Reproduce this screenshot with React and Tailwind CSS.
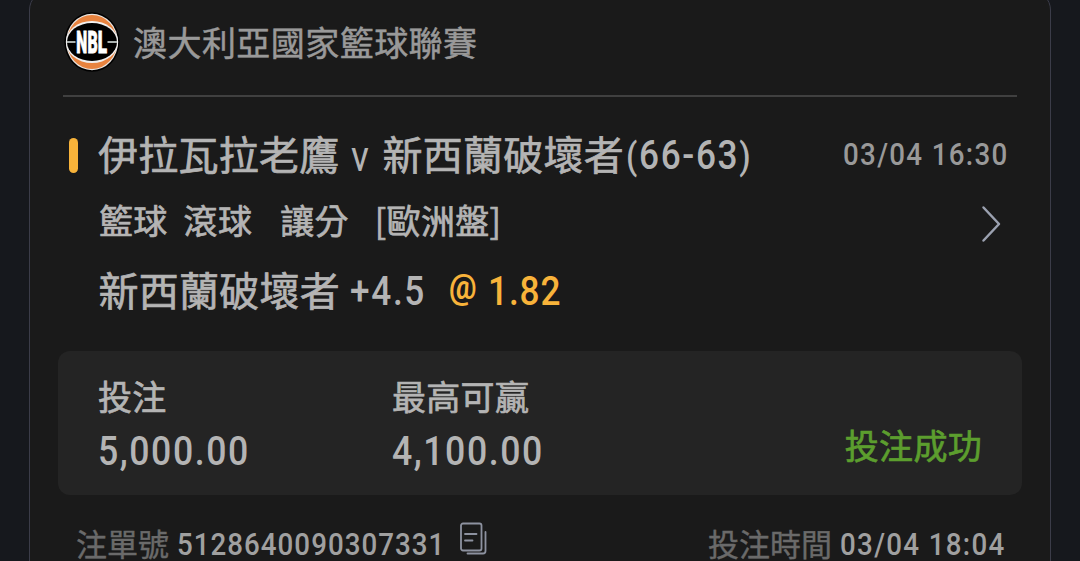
import { clsx } from 'clsx';

// Narrow figures: Roboto squeezed horizontally, the wrapper keeps the final width.
function Num({ children, className, box }) {
  return (
    <span className={clsx('block shrink-0 whitespace-nowrap font-[Roboto,sans-serif] font-medium [-webkit-text-stroke:0px]', box)}>
      <span className={clsx('inline-block origin-left scale-x-[0.88] whitespace-pre', className)}>{children}</span>
    </span>
  );
}

function LeagueLogo() {
  return (
    <svg className="h-[60px] w-[56px] shrink-0" viewBox="0 0 56 60">
      <ellipse cx="28" cy="30" rx="27.6" ry="29.8" fill="#000" />
      <ellipse cx="28" cy="30" rx="26" ry="28.2" fill="#e9e4e0" />
      <ellipse cx="28" cy="30" rx="25" ry="27" fill="#e8833f" />
      <ellipse cx="28" cy="30" rx="26.2" ry="21" fill="#f0efee" />
      <ellipse cx="28" cy="30" rx="25" ry="19" fill="#000" />
      <path d="M3 30h50" stroke="#a9b0ae" strokeWidth="1.8" />
      <rect x="11.5" y="18" width="32" height="24" fill="#000" />
      <g fontFamily="Roboto, sans-serif" fontWeight="900" fontSize="30.5" fill="#fff" stroke="#fff" strokeWidth="0.9">
        <text transform="translate(12.2 41) scale(0.51 1)">N</text>
        <text transform="translate(23.4 41) scale(0.52 1)">B</text>
        <text transform="translate(33.7 41) scale(0.56 1)">L</text>
      </g>
    </svg>
  );
}

function CopyIcon() {
  return (
    <svg className="mb-[10px] h-[34px] w-[28px] shrink-0" viewBox="0 0 28 34" fill="none" stroke="#8d92a0" strokeWidth="1.8" strokeLinecap="round" strokeLinejoin="round">
      <rect x="1" y="1.500" width="20.500" height="27" rx="2" />
      <path d="M5 12h11.500M5 18.500h7.500" />
      <path d="M25.500 10v19a2.500 2.500 0 0 1-2.500 2.500H7.500" />
    </svg>
  );
}

function Stat({ label, value, className }) {
  return (
    <div className={className}>
      <div className="h-[50px] text-[34px] leading-[50px] tracking-[0.3px]">{label}</div>
      <Num box="h-[52px] pt-[4px]" className="text-[40.5px] leading-[52px] tracking-[1.75px]">{value}</Num>
    </div>
  );
}

export default function App() {
  return (
    <div className="h-[561px] w-[1080px] overflow-hidden bg-[#16181d] font-['Noto_Sans_CJK_TC',sans-serif] text-[#b4b4b4] [-webkit-text-stroke:0.7px]">
      <div className="-mt-2.5 ml-[29px] h-[620px] w-[1022px] rounded-[20px] border-[1.5px] border-[#3b3c49] bg-[#1a1a1a] pt-[9px]">
        <div className="mx-[33px] flex h-[97px] items-center border-b-2 border-[#404040] pb-[11px] text-[#999]">
          <div className="pl-px">
            <LeagueLogo />
          </div>
          <div className="ml-[13px] pb-px text-[34px] leading-[50px] tracking-[0.45px] [-webkit-text-stroke:0.5px]">澳大利亞國家籃球聯賽</div>
        </div>

        <div className="mt-[28px] mr-[42px] ml-[38.5px] flex h-[60px] items-center whitespace-nowrap">
          <div className="h-[35px] w-[9px] rounded-full bg-[#f8b33a]" />
          <div className="ml-[20.5px] pb-[4px] text-[40px] leading-[60px] tracking-[0.25px]">伊拉瓦拉老鷹</div>
          <Num box="ml-[11px] w-[21px] pt-[3px]" className="text-[42px] leading-[60px] font-normal">v</Num>
          <div className="ml-[11px] pb-[4px] text-[40px] leading-[60px] tracking-[0.25px]">新西蘭破壞者</div>
          <Num box="ml-[2px] w-[128px] pt-[3px]" className="text-[40px] leading-[60px] tracking-[1.9px]">
            <span className="text-[37px]">(</span>66-63<span className="text-[37px]">)</span>
          </Num>
          <Num box="ml-auto w-[165px]" className="text-[31.5px] leading-[54px] tracking-[1.5px] text-[#999]">03/04 16:30</Num>
        </div>

        <div className="mr-[49px] ml-[69px] flex h-[70px] items-center whitespace-nowrap text-[34px] leading-[50px] tracking-[0.3px]">
          <span>籃球</span>
          <span className="ml-[16px]">滾球</span>
          <span className="ml-[28px]">讓分</span>
          <span className="ml-[26px]">[歐洲盤]</span>
          <svg className="mt-[8px] ml-auto h-[38px] w-[20px]" viewBox="0 0 20 38" fill="none" stroke="#9ba1b0" strokeWidth="2.5" strokeLinecap="round" strokeLinejoin="round">
            <path d="M2.500 2.500l15.500 16.500L2.500 35.500" />
          </svg>
        </div>

        <div className="ml-[68.5px] flex h-[70px] items-center whitespace-nowrap">
          <div className="pb-[3px] text-[40px] leading-[60px] tracking-[0.25px]">新西蘭破壞者</div>
          <Num box="ml-[10px] w-[99px] pt-[4px]" className="text-[40px] leading-[60px] tracking-[1.9px]">+4.5</Num>
          <Num box="w-[39px] pb-[4px]" className="text-[35px] leading-[56px] scale-x-[0.82] font-bold text-[#f8b33a]">@</Num>
          <Num box="w-[90px] pt-[4px]" className="text-[40px] leading-[60px] tracking-[1px] text-[#f8b33a]">1.82</Num>
        </div>

        <div className="mt-[26px] ml-[28px] flex h-[144px] w-[964px] items-start rounded-[12px] bg-[#242424] pt-[20px] pr-[40px] pl-[40px]">
          <Stat label="投注" value="5,000.00" className="w-[294px]" />
          <Stat label="最高可贏" value="4,100.00" />
          <div className="mt-[49px] ml-auto text-[34px] leading-[50px] tracking-[0.3px] text-[#5c9e2e]">投注成功</div>
        </div>

        <div className="mt-[24px] mr-[44px] ml-[46px] flex h-[50px] items-center whitespace-nowrap text-[31px] leading-[36px]">
          <span className="pb-[3px] text-[#6a6a6a] [-webkit-text-stroke:0.4px]">注單號</span>
          <Num box="ml-[8px] w-[283px] pt-[2px]" className="text-[31.5px] leading-[32px] tracking-[1.15px] text-[#a0a0a0]">5128640090307331</Num>
          <CopyIcon />
          <span className="ml-auto pb-[3px] text-[#6a6a6a] [-webkit-text-stroke:0.4px]">投注時間</span>
          <Num box="ml-[8px] w-[166px] pt-[2px]" className="text-[31.5px] leading-[32px] tracking-[1.5px] text-[#a0a0a0]">03/04 18:04</Num>
        </div>
      </div>
    </div>
  );
}
